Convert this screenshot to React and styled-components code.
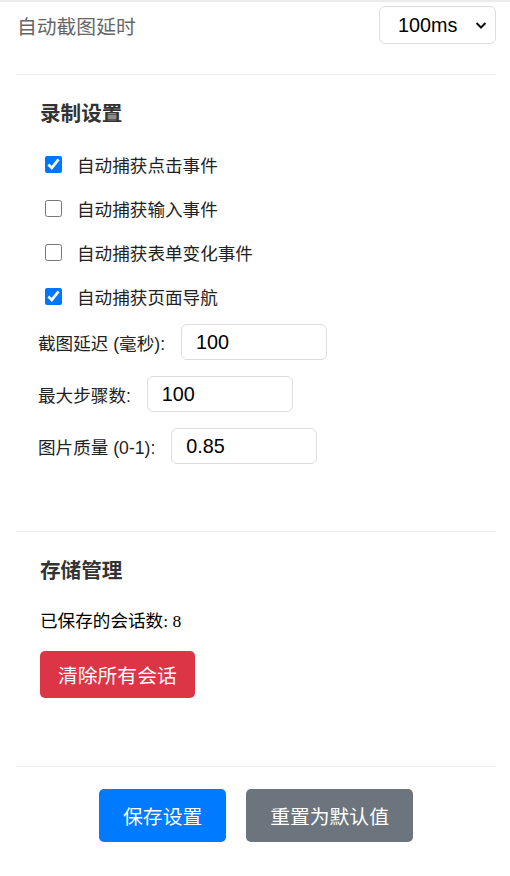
import React, { useState } from 'react';
import styled, { createGlobalStyle } from 'styled-components';

const GlobalStyle = createGlobalStyle`
  html, body {
    margin: 0;
    padding: 0;
    background: #fff;
  }
  body {
    font-family: "Liberation Sans", Arial, "Noto Sans CJK SC", sans-serif;
    font-size: 17.6px;
    color: #222;
  }
`;

const TopEdge = styled.div`
  height: 2px;
  background: #ececec;
`;

const Page = styled.div`
  padding: 0 14px 0 16px;
`;

const DelayRow = styled.div`
  display: flex;
  justify-content: space-between;
  align-items: center;
  padding: 4px 0 30px;
  border-bottom: 1px solid #eee;
`;

const DelayLabel = styled.span`
  font-size: 19.8px;
  color: #666;
  padding-left: 1px;
`;

const SelectWrap = styled.div`
  position: relative;
  width: 117px;
  height: 38px;
`;

const Select = styled.select`
  appearance: none;
  width: 100%;
  height: 100%;
  box-sizing: border-box;
  border: 1px solid #ddd;
  border-radius: 6px;
  background: #fff;
  font-family: "Liberation Sans", Arial, sans-serif;
  font-size: 19.8px;
  color: #000;
  padding: 0 0 0 18px;
  outline: none;
`;

const Chevron = styled.svg`
  position: absolute;
  right: 9px;
  top: 15px;
  pointer-events: none;
`;

const Section = styled.section`
  padding: 25px 24px ${(p) => p.bottom}px;
  border-bottom: 1px solid #eee;
`;

const SectionTitle = styled.h3`
  margin: 0;
  font-size: 20.6px;
  line-height: 28px;
  font-weight: 700;
  color: #333;
`;

const CheckList = styled.div`
  margin-top: 14px;
  display: flex;
  flex-direction: column;
`;

const CheckRow = styled.label`
  display: flex;
  align-items: center;
  height: 44px;
  padding-left: 5px;
  gap: 15px;
  color: #222;
  cursor: pointer;
`;

const Check = styled.input`
  width: 17px;
  height: 17px;
  margin: 0;
  accent-color: #0075ff;
`;

const Fields = styled.div`
  margin-top: 6px;
  display: flex;
  flex-direction: column;
  gap: 16px;
`;

const FieldRow = styled.div`
  display: flex;
  align-items: center;
  gap: 16px;
`;

const FieldLabel = styled.label`
  color: #222;
  margin-left: -2px;
`;

const NumberInput = styled.input`
  width: 146px;
  height: 36px;
  box-sizing: border-box;
  border: 1px solid #ddd;
  border-radius: 6px;
  padding: 0 14px;
  font-family: "Liberation Sans", Arial, sans-serif;
  font-size: 19.8px;
  color: #000;
  outline: none;
`;

const Count = styled.p`
  margin: 24px 0 0;
  font-family: "Liberation Serif", "Noto Sans CJK SC", serif;
  line-height: 24px;
  color: #000;
`;

const Button = styled.button`
  border: none;
  border-radius: 5px;
  color: #fff;
  background: ${(p) => p.bg};
  height: ${(p) => p.h}px;
  padding: 0 ${(p) => p.px}px;
  font-size: 19.8px;
  font-family: "Noto Sans CJK SC", sans-serif;
  cursor: pointer;
`;

const DangerButton = styled(Button)`
  margin-top: 18px;
`;

const Footer = styled.div`
  display: flex;
  justify-content: center;
  gap: 20px;
  padding-top: 22px;
`;

const checks = [
  { label: '自动捕获点击事件', on: true },
  { label: '自动捕获输入事件', on: false },
  { label: '自动捕获表单变化事件', on: false },
  { label: '自动捕获页面导航', on: true },
];

const fields = [
  { label: '截图延迟 (毫秒):', value: '100' },
  { label: '最大步骤数:', value: '100' },
  { label: '图片质量 (0-1):', value: '0.85' },
];

export default function App() {
  const [state, setState] = useState(checks.map((c) => c.on));
  return (
    <>
      <GlobalStyle />
      <TopEdge />
      <Page>
        <DelayRow>
          <DelayLabel>自动截图延时</DelayLabel>
          <SelectWrap>
            <Select defaultValue="100">
              <option value="100">100ms</option>
              <option value="200">200ms</option>
              <option value="500">500ms</option>
            </Select>
            <Chevron width="12" height="9" viewBox="0 0 12 9">
              <path d="M1.5 2 L6 6.5 L10.5 2" fill="none" stroke="#111" strokeWidth="2" />
            </Chevron>
          </SelectWrap>
        </DelayRow>

        <Section bottom={67}>
          <SectionTitle>录制设置</SectionTitle>
          <CheckList>
            {checks.map((c, i) => (
              <CheckRow key={c.label}>
                <Check
                  type="checkbox"
                  checked={state[i]}
                  onChange={() =>
                    setState((s) => s.map((v, j) => (j === i ? !v : v)))
                  }
                />
                {c.label}
              </CheckRow>
            ))}
          </CheckList>
          <Fields>
            {fields.map((f) => (
              <FieldRow key={f.label}>
                <FieldLabel>{f.label}</FieldLabel>
                <NumberInput type="text" defaultValue={f.value} />
              </FieldRow>
            ))}
          </Fields>
        </Section>

        <Section bottom={68}>
          <SectionTitle>存储管理</SectionTitle>
          <Count>已保存的会话数: 8</Count>
          <DangerButton bg="#dc3545" h={47} px={18}>
            清除所有会话
          </DangerButton>
        </Section>

        <Footer>
          <Button bg="#007bff" h={53} px={24}>
            保存设置
          </Button>
          <Button bg="#6c757d" h={53} px={24}>
            重置为默认值
          </Button>
        </Footer>
      </Page>
    </>
  );
}
